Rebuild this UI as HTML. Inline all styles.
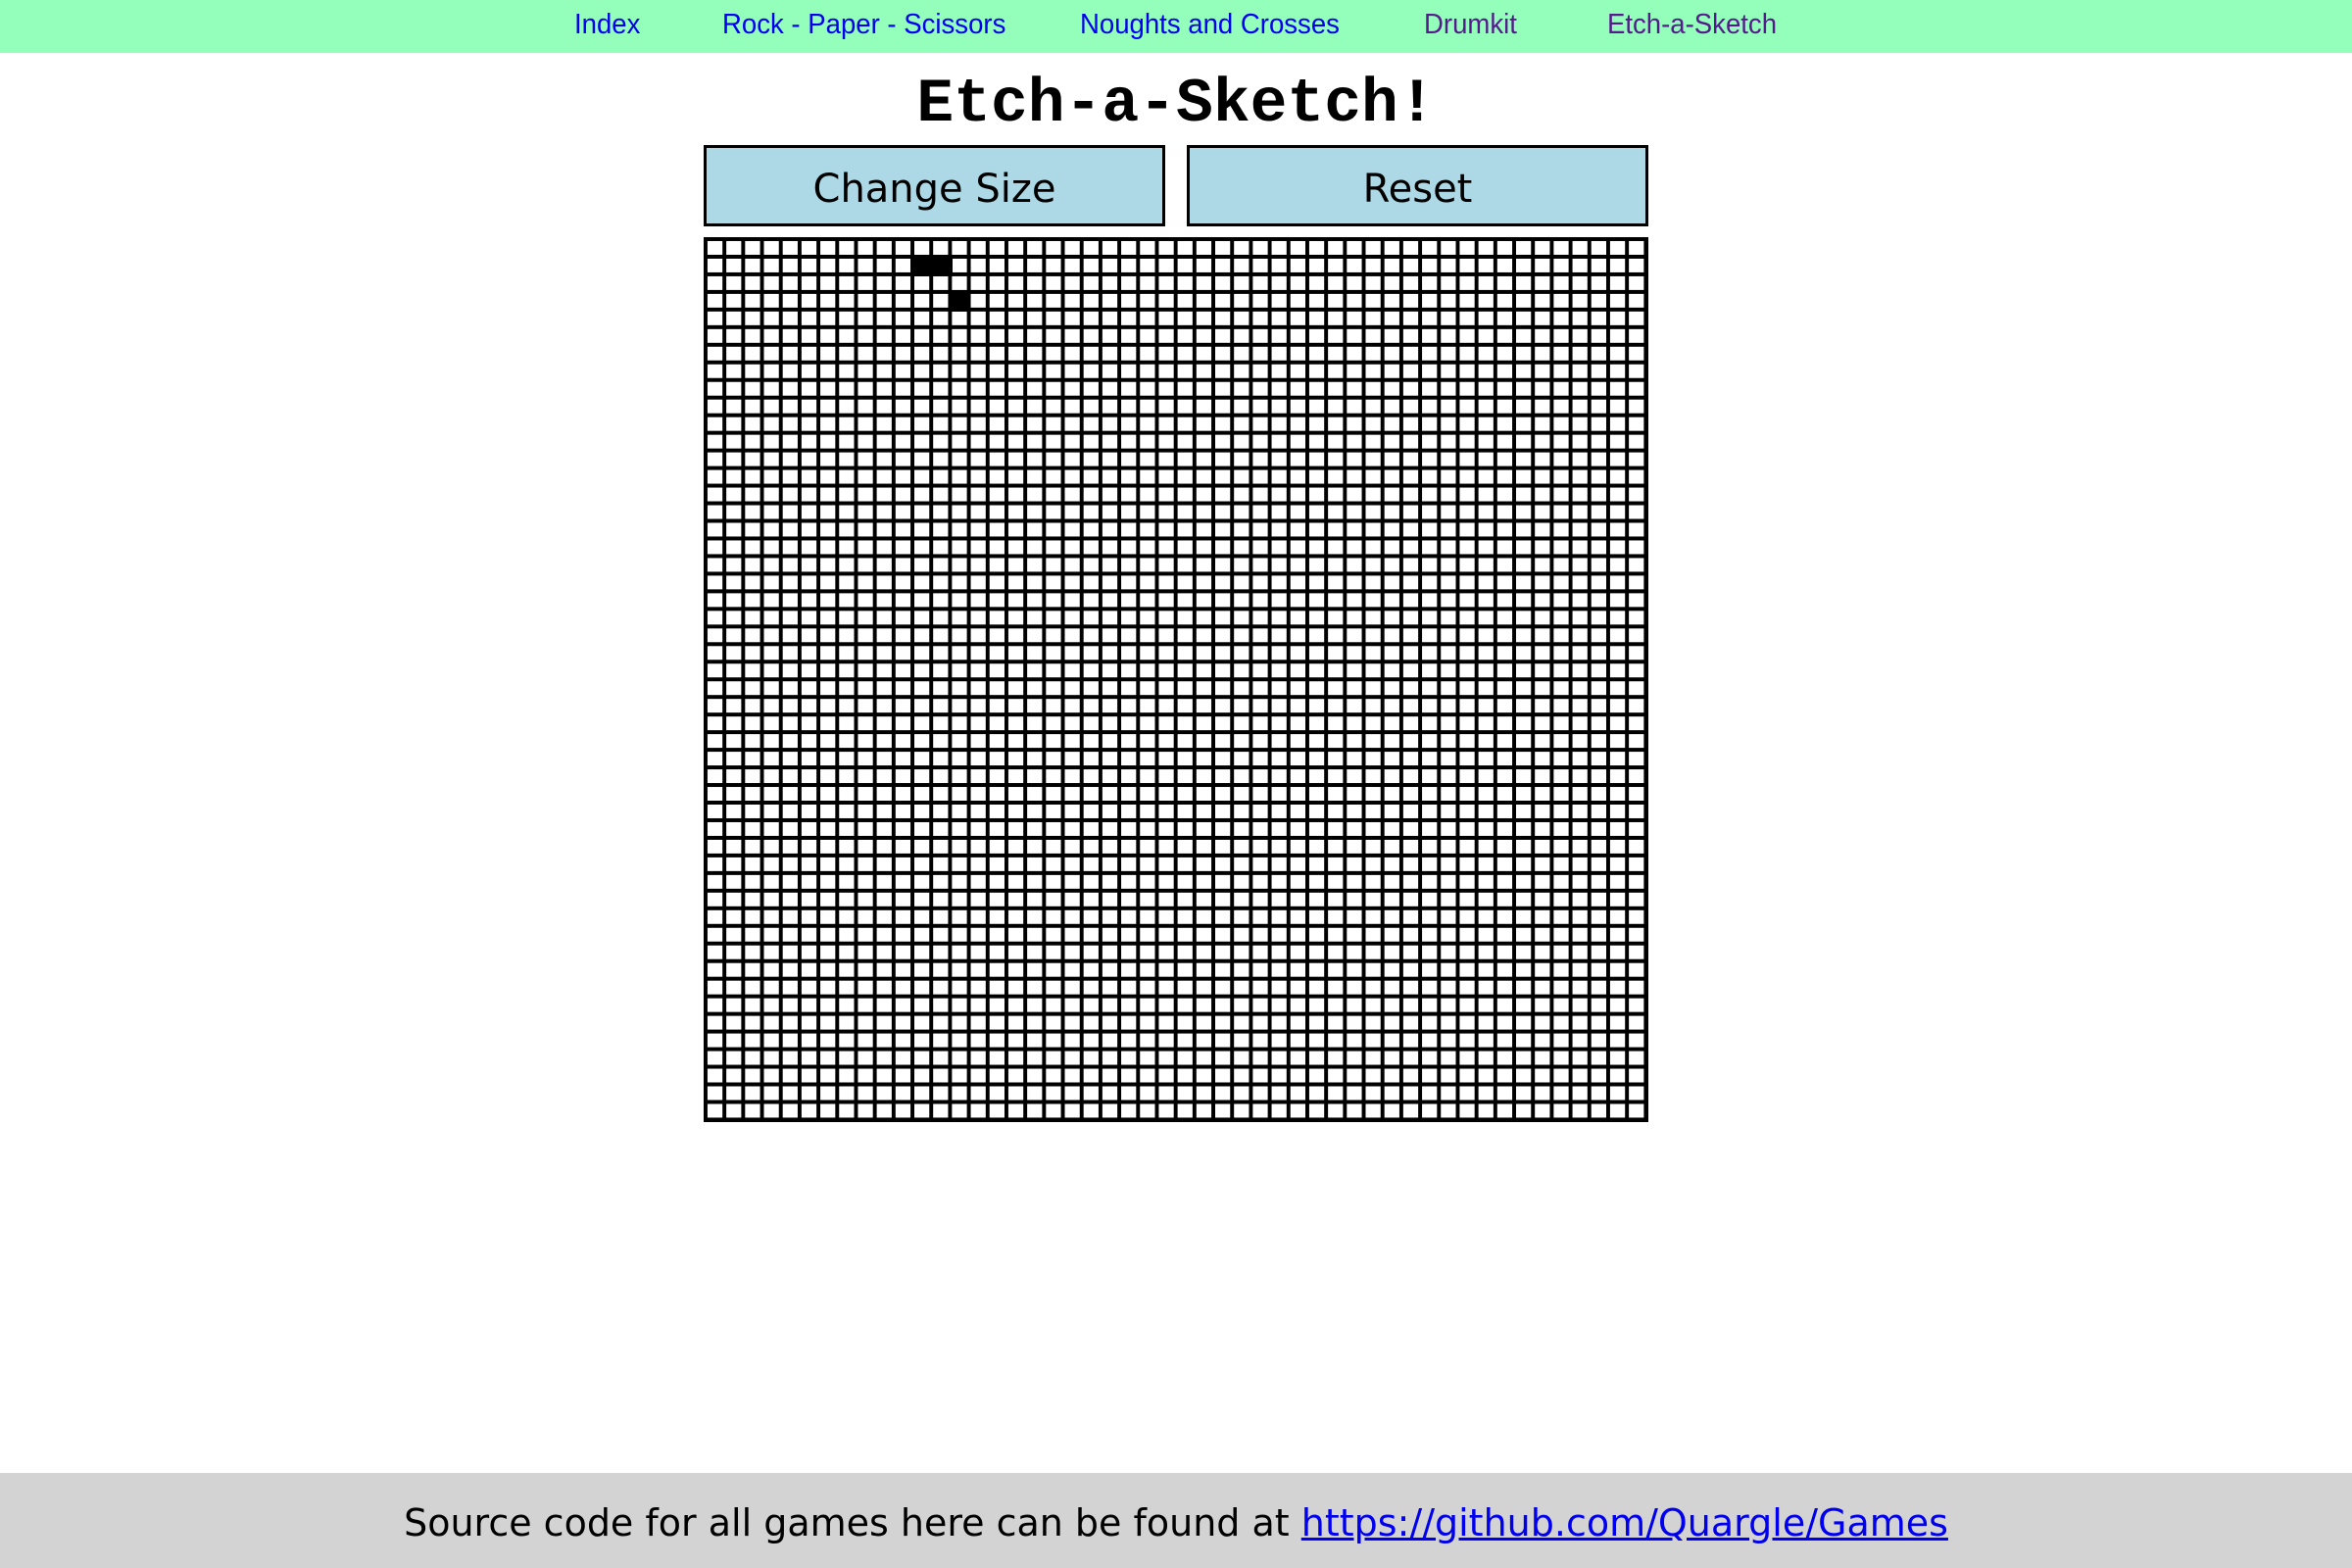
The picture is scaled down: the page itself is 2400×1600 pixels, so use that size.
<!DOCTYPE html>
<html><head><meta charset="utf-8"><style>
html,body{margin:0;padding:0;width:2400px;height:1600px;background:#fff;overflow:hidden;position:relative}
.nav{position:absolute;left:0;top:0;width:2400px;height:54px;background:#93ffbb}
.nav a{position:absolute;top:9px;font-family:"Liberation Sans",sans-serif;font-size:29px;text-decoration:none;color:#0000ee;white-space:nowrap;transform-origin:left top;transform:scaleX(0.95)}
.nav a.v{color:#551a8b}
h1{position:absolute;left:0;width:2400px;top:67px;margin:0;text-align:center;font-family:"Liberation Mono",monospace;font-weight:bold;font-size:63px;line-height:80px}
.btn{position:absolute;top:148px;width:465px;height:77px;border:3px solid #000;background:#add8e6;font-family:"DejaVu Sans",sans-serif;font-size:40px;line-height:85px;text-align:center}
.grid{position:absolute;left:718px;top:242px;width:960px;height:899px;border-right:4px solid #000;border-bottom:4px solid #000;
background-color:#fff;
background-image:linear-gradient(to right,#000 4px,transparent 4px),linear-gradient(to bottom,#000 4px,transparent 4px);
background-size:19.2px 100%,100% 17.98px}
.b{position:absolute;background:#000}
.foot{position:absolute;left:0;top:1503px;width:2400px;height:97px;background:#d3d3d3;text-align:center;font-family:"DejaVu Sans",sans-serif;font-size:38px;line-height:103px}
.foot a{color:#0000ee;text-decoration:underline}
</style></head><body>
<div class="nav">
<a style="left:586px">Index</a>
<a style="left:737px">Rock - Paper - Scissors</a>
<a style="left:1102px">Noughts and Crosses</a>
<a class="v" style="left:1453px">Drumkit</a>
<a class="v" style="left:1640px">Etch-a-Sketch</a>
</div>
<h1>Etch-a-Sketch!</h1>
<div class="btn" style="left:718px">Change Size</div>
<div class="btn" style="left:1211px">Reset</div>
<div class="grid"></div>
<div class="b" style="left:929px;top:260px;width:43px;height:22px"></div>
<div class="b" style="left:968px;top:296px;width:22px;height:22px"></div>
<div class="foot"><span>Source code for all games here can be found at <a>https://github.com/Quargle/Games</a></span></div>
</body></html>
